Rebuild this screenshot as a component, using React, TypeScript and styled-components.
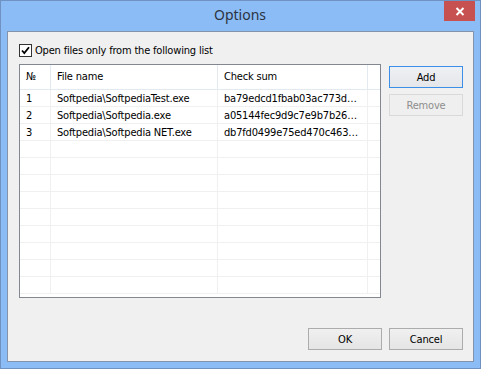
import React from "react";
import styled, { createGlobalStyle, css } from "styled-components";

const Global = createGlobalStyle`
  html, body { margin: 0; padding: 0; background: #ffffff; }
  body { font-family: "DejaVu Sans Condensed", "DejaVu Sans", Tahoma, sans-serif; font-size: 11px; letter-spacing: -0.18px; color: #000; }
  * { box-sizing: border-box; }
`;

const Window = styled.div`
  width: 481px;
  height: 369px;
  background: #8bbcf6;
  border: 1px solid #6f92c2;
  padding: 0 6px 6px 6px;
  display: flex;
  flex-direction: column;
`;

const TitleBar = styled.div`
  height: 30px;
  display: grid;
  grid-template-columns: 1fr auto 1fr;
  align-items: start;
  margin: 0 -1px 0 0;
`;

const Title = styled.div`
  grid-column: 2;
  font-family: "Noto Sans", "Open Sans", sans-serif;
  font-size: 14px;
  letter-spacing: 0;
  line-height: 28px;
  color: #2b3340;
  padding-right: 2px;
`;

const CloseButton = styled.div`
  grid-column: 3;
  justify-self: end;
  width: 31px;
  height: 20px;
  background: #c75050;
  display: flex;
  align-items: center;
  justify-content: center;
`;

const Client = styled.div`
  flex: 1;
  background: #f0f0f0;
  border: 1px solid #8393aa;
  display: flex;
  flex-direction: column;
  padding: 12px 10px 11px 11px;
`;

const CheckRow = styled.label`
  display: flex;
  align-items: center;
  gap: 3px;
  height: 13px;
`;

const CheckBox = styled.span`
  width: 13px;
  height: 13px;
  border: 1px solid #333333;
  background: #ffffff;
  display: flex;
  align-items: center;
  justify-content: center;
`;

const Main = styled.div`
  display: flex;
  gap: 8px;
  margin-top: 7px;
`;

const ListBox = styled.div`
  width: 362px;
  height: 234px;
  border: 1px solid #828790;
  background: #ffffff;
  overflow: hidden;
`;

const cols = "31px 167px 150px 12px";

const HeaderRow = styled.div`
  display: grid;
  grid-template-columns: ${cols};
  height: 25px;
  border-bottom: 1px solid #e3e9f1;
`;

const HeaderCell = styled.div`
  border-right: 1px solid #e3e9f1;
  padding-left: 6px;
  display: flex;
  align-items: center;
  padding-bottom: 1px;
  white-space: nowrap;
  &:last-child { border-right: none; }
`;

const Row = styled.div`
  display: grid;
  grid-template-columns: ${cols};
  height: 17px;
  border-bottom: 1px solid #f0f0f0;
`;

const Cell = styled.div`
  border-right: 1px solid #f0f0f0;
  padding-left: 6px;
  display: flex;
  align-items: center;
  white-space: nowrap;
  overflow: hidden;
  &:last-child { border-right: none; }
`;

const SideButtons = styled.div`
  display: flex;
  flex-direction: column;
  gap: 6px;
  padding-top: 2px;
`;

const Button = styled.div<{ $variant?: "default" | "disabled" }>`
  width: 74px;
  height: 22px;
  border: 1px solid #acacac;
  background: linear-gradient(#f0f0f0, #e5e5e5);
  display: flex;
  align-items: center;
  justify-content: center;
  color: #000;
  ${(p) =>
    p.$variant === "default" &&
    css`
      border-color: #3c8fe6;
      background: linear-gradient(#eef1f4, #e4e6e9);
    `}
  ${(p) =>
    p.$variant === "disabled" &&
    css`
      border-color: #d9d9d9;
      background: #efefef;
      color: #8d8d8d;
    `}
`;

const Footer = styled.div`
  margin-top: auto;
  display: flex;
  justify-content: flex-end;
  gap: 7px;
`;

const rows = [
  ["1", "Softpedia\\SoftpediaTest.exe", "ba79edcd1fbab03ac773d…"],
  ["2", "Softpedia\\Softpedia.exe", "a05144fec9d9c7e9b7b26…"],
  ["3", "Softpedia\\Softpedia NET.exe", "db7fd0499e75ed470c463…"],
];

export default function App() {
  const empty = Array.from({ length: 9 });
  return (
    <>
      <Global />
      <Window>
        <TitleBar>
          <Title>Options</Title>
          <CloseButton>
            <svg width="10" height="9" viewBox="0 0 10 9">
              <path d="M1.5 1 L8.5 8 M8.5 1 L1.5 8" stroke="#ffffff" strokeWidth="2" />
            </svg>
          </CloseButton>
        </TitleBar>
        <Client>
          <CheckRow>
            <CheckBox>
              <svg width="11" height="11" viewBox="0 0 11 11">
                <path d="M2 5.5 L4.3 8 L9 2.2" stroke="#000" strokeWidth="1.8" fill="none" />
              </svg>
            </CheckBox>
            <span>Open files only from the following list</span>
          </CheckRow>
          <Main>
            <ListBox>
              <HeaderRow>
                <HeaderCell>№</HeaderCell>
                <HeaderCell>File name</HeaderCell>
                <HeaderCell>Check sum</HeaderCell>
                <HeaderCell />
              </HeaderRow>
              {rows.map((r) => (
                <Row key={r[0]}>
                  <Cell>{r[0]}</Cell>
                  <Cell>{r[1]}</Cell>
                  <Cell>{r[2]}</Cell>
                  <Cell />
                </Row>
              ))}
              {empty.map((_, i) => (
                <Row key={"e" + i}>
                  <Cell />
                  <Cell />
                  <Cell />
                  <Cell />
                </Row>
              ))}
            </ListBox>
            <SideButtons>
              <Button $variant="default">Add</Button>
              <Button $variant="disabled">Remove</Button>
            </SideButtons>
          </Main>
          <Footer>
            <Button>OK</Button>
            <Button>Cancel</Button>
          </Footer>
        </Client>
      </Window>
    </>
  );
}
